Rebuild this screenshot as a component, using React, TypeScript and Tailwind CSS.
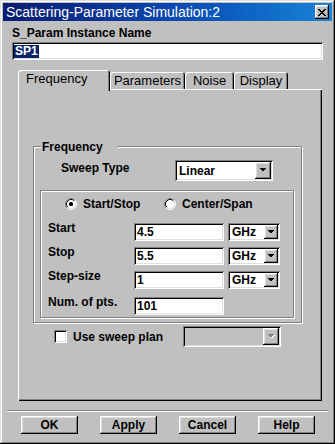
import React from 'react';

const sunken = 'shadow-[inset_1px_1px_0_#808080,inset_-1px_-1px_0_#fff,inset_2px_2px_0_#000,inset_-2px_-2px_0_#dfdfdf]';
const raised = 'shadow-[inset_-1px_-1px_0_#000,inset_1px_1px_0_#fff,inset_-2px_-2px_0_#808080,inset_2px_2px_0_#dfdfdf]';
const etched = 'border border-[#808080] shadow-[inset_1px_1px_0_#fff,1px_1px_0_#fff]';

function Arrow({ disabled }: { disabled?: boolean }) {
  return (
    <svg width="8" height="5" viewBox="0 0 8 5" shapeRendering="crispEdges">
      {disabled && <polygon points="1,1 8,1 4.5,4.5" fill="#fff" />}
      <polygon points="0,0 7,0 3.5,3.5" fill={disabled ? '#808080' : '#000'} />
    </svg>
  );
}

function Combo({ value, w, h, btn, disabled }: { value?: string; w: string; h: string; btn: string; disabled?: boolean }) {
  return (
    <div className={`${w} ${h} ${sunken} ${disabled ? 'bg-[#c0c0c0]' : 'bg-white'} flex items-stretch p-[2px]`}>
      <span className="flex-1 flex items-center pl-[2px] text-[12px] font-bold leading-[14px]">{value}</span>
      <span className={`${btn} bg-[#c0c0c0] ${raised} flex items-center justify-center`}>
        <Arrow disabled={disabled} />
      </span>
    </div>
  );
}

function Field({ value }: { value: string }) {
  return (
    <div className={`w-[90px] h-[18px] bg-white ${sunken} flex items-center pl-[3px] text-[12px] font-bold leading-[14px]`}>
      {value}
    </div>
  );
}

function Radio({ checked }: { checked?: boolean }) {
  return (
    <svg width="12" height="12" viewBox="0 0 12 12">
      <circle cx="6" cy="6" r="5" fill="#fff" />
      <path d="M2.11 9.89 A5.5 5.5 0 0 1 9.89 2.11" fill="none" stroke="#808080" />
      <path d="M9.89 2.11 A5.5 5.5 0 0 1 2.11 9.89" fill="none" stroke="#fff" />
      <path d="M2.82 9.18 A4.5 4.5 0 0 1 9.18 2.82" fill="none" stroke="#000" />
      <path d="M9.18 2.82 A4.5 4.5 0 0 1 2.82 9.18" fill="none" stroke="#dfdfdf" />
      {checked && <rect x="4" y="4" width="4" height="4" rx="1.5" fill="#000" />}
    </svg>
  );
}

function FreqRow({ label, value, unit, first }: { label: string; value: string; unit?: boolean; first?: string }) {
  return (
    <div className={`flex items-start ${first}`}>
      <span className="ml-[7px] w-[86px] -mt-[2px] text-[12px] font-bold leading-[14px]">{label}</span>
      <Field value={value} />
      {unit && (
        <div className="ml-[4px]">
          <Combo value="GHz" w="w-[52px]" h="h-[18px]" btn="w-[14px]" />
        </div>
      )}
    </div>
  );
}

const tabs = [
  { name: 'Parameters', w: 'w-[75px]' },
  { name: 'Noise', w: 'w-[49px]' },
  { name: 'Display', w: 'w-[54px]' },
];

export default function App() {
  return (
    <div className="w-[335px] h-[444px] bg-[#c0c0c0] p-[3px] flex flex-col text-black font-['Liberation_Sans',Arial,sans-serif] shadow-[inset_-1px_-1px_0_#000,inset_1px_1px_0_#dfdfdf,inset_-2px_-2px_0_#808080,inset_2px_2px_0_#fff]">
      {/* title bar */}
      <div className="h-[18px] flex items-center justify-between pl-[3px] pr-[3px] bg-linear-to-r from-[#0a1c70] via-[#0a46ae] to-[#1a84d8]">
        <span className="text-white text-[14px] leading-none">Scattering-Parameter Simulation:2</span>
        <span className={`w-[14px] h-[14px] bg-[#c0c0c0] ${raised} flex items-center justify-center`}>
          <svg width="8" height="7" viewBox="0 0 8 7" shapeRendering="crispEdges">
            <path d="M0 0h2l2 2.5L6 0h2L5 3.5 8 7H6L4 4.5 2 7H0l3-3.5z" fill="#000" />
          </svg>
        </span>
      </div>

      <div className="flex flex-col px-[9px]">
        <div className="mt-[5px] text-[12px] font-bold leading-[14px]">S_Param Instance Name</div>
        <div className={`mt-[2px] h-[18px] w-[311px] bg-white ${sunken} flex items-center pl-[2px]`}>
          <span className="bg-[#0a246a] text-white font-bold text-[12px] leading-[13px] px-[1px]">SP1</span>
        </div>

        {/* tabs */}
        <div className="ml-[6px] mt-[10px] flex flex-col">
          <div className="flex items-end h-[19px]">
            <div className="relative z-10 -mb-[2px] w-[92px] h-[21px] bg-[#c0c0c0] rounded-t-[3px] shadow-[inset_1px_1px_0_#fff,inset_-1px_0_0_#000,inset_-2px_0_0_#808080] pl-[8px] pt-[2px] text-[13px] leading-[14px]">
              Frequency
            </div>
            {tabs.map((t) => (
              <div
                key={t.name}
                className={`${t.w} h-[17px] rounded-t-[3px] shadow-[inset_1px_1px_0_#fff,inset_-1px_0_0_#000,inset_-2px_0_0_#808080] flex justify-center pt-[2px] text-[13px] leading-[14px]`}
              >
                {t.name}
              </div>
            ))}
          </div>

          <div className="w-[304px] h-[312px] flex flex-col shadow-[inset_1px_1px_0_#fff,inset_-1px_-1px_0_#000,inset_-2px_-2px_0_#808080]">
            {/* Frequency group */}
            <div className={`relative ml-[15px] mt-[57px] w-[269px] ${etched} flex flex-col pt-[13px] pb-[4px]`}>
              <span className="absolute -top-[7px] left-[7px] w-[77px] bg-[#c0c0c0] pl-[1px] text-[12px] font-bold leading-[14px]">
                Frequency
              </span>
              <div className="flex items-start">
                <span className="ml-[27px] w-[114px] mt-[1px] text-[12px] font-bold leading-[14px]">Sweep Type</span>
                <Combo value="Linear" w="w-[98px]" h="h-[21px]" btn="w-[16px]" />
              </div>

              <div className={`ml-[6px] mt-[9px] w-[254px] ${etched} flex flex-col pt-[7px] pb-[2px]`}>
                <div className="flex items-center h-[12px] ml-[24px] text-[12px] font-bold leading-[14px]">
                  <div className="w-[99px] flex items-center gap-[6px]">
                    <Radio checked />
                    <span>Start/Stop</span>
                  </div>
                  <div className="flex items-center gap-[6px]">
                    <Radio />
                    <span>Center/Span</span>
                  </div>
                </div>
                <FreqRow label="Start" value="4.5" unit first="mt-[13px]" />
                <FreqRow label="Stop" value="5.5" unit first="mt-[6px]" />
                <FreqRow label="Step-size" value="1" unit first="mt-[6px]" />
                <FreqRow label="Num. of pts." value="101" first="mt-[8px]" />
              </div>
            </div>

            {/* sweep plan */}
            <div className="mt-[3px] flex items-center h-[21px]">
              <span className={`ml-[36px] w-[13px] h-[13px] bg-white ${sunken}`} />
              <span className="ml-[6px] w-[110px] text-[12px] font-bold leading-[14px]">Use sweep plan</span>
              <Combo w="w-[98px]" h="h-[21px]" btn="w-[16px]" disabled />
            </div>
          </div>
        </div>

        {/* separator */}
        <div className="-mx-[5px] mt-[9px] border-t border-t-[#808080] border-b border-b-white" />

        <div className="mt-[4px] ml-[9px] flex gap-[22px]">
          {['OK', 'Apply', 'Cancel', 'Help'].map((b) => (
            <div key={b} className={`w-[57px] h-[18px] bg-[#c0c0c0] ${raised} flex items-center justify-center text-[12px] font-bold leading-[14px]`}>
              {b}
            </div>
          ))}
        </div>
      </div>
    </div>
  );
}
